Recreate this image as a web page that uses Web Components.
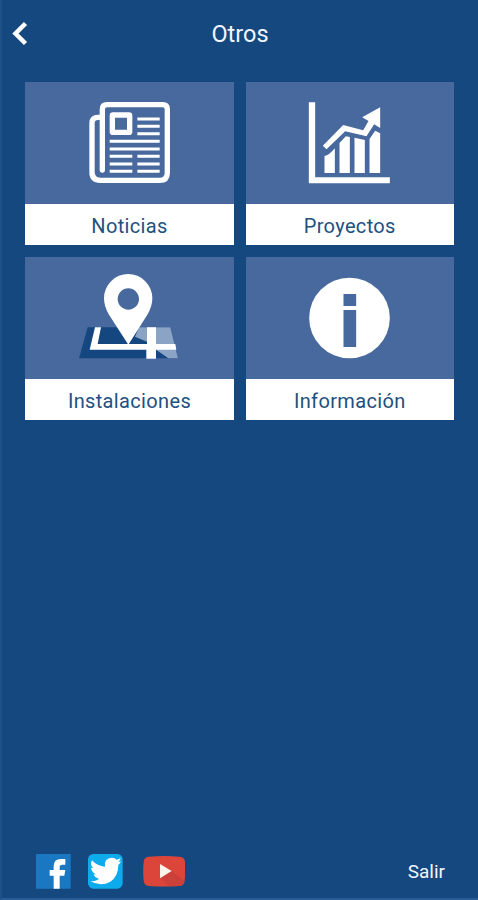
<!DOCTYPE html>
<html lang="es">
<head>
<meta charset="utf-8">
<title>Otros</title>
<style>
    body {
        margin: 0;
        background: #15487f;
    }
</style>
</head>
<body>
<others-screen>
    <app-bar slot="header">Otros</app-bar>
    <menu-tile label="Noticias">
        <svg viewBox="30 36 627 366" fill="none" stroke="#fff">
            <path stroke-width="16" stroke-linecap="round" stroke-linejoin="round" d="M262 300V118Q262 104 276 104H443Q457 104 457 118V308Q457 331 434 331H256Q231 331 231 306V160Q231 142 249 142H256"/>
            <rect x="292" y="135" width="52" height="52" rx="2" stroke-width="16"/>
            <path stroke-width="9" d="M367 147H434M367 169H434M367 191H434M284 214H434M284 237H434M284 259H352M367 259H434M284 282H352M367 282H434M284 304H352M367 304H434"/>
        </svg>
    </menu-tile>
    <menu-tile label="Proyectos">
        <svg viewBox="31.5 36 625.5 366" fill="#fff">
            <path d="M220 97H239V322H463V340H220Z"/>
            <path d="M262 227L323 165L383 181L399 153L380 142L434 112V174L416 163L393 199L329 184L273 238Z"/>
            <path d="M267 258Q281 256 298 235V309H267ZM312 219L331 199L343 201V309H312ZM357 203L388 210V309H357ZM402 207L419 182L434 190V309H402Z"/>
        </svg>
    </menu-tile>
    <menu-tile label="Instalaciones">
        <svg viewBox="30 21 627 366">
            <path fill="#144780" d="M218 232H466L489 325H192Z"/>
            <path fill="#8ba3c5" d="M372 232H466L489 325H460L423 299L396 275L360 260Z"/>
            <path fill="#fff" d="M240 232H258L248 282H396V232H423V282H481L484 299H423V326H394V299H224Z"/>
            <path fill="#fff" fill-rule="evenodd" d="M340 284L282 194Q267 170 267 145A72.500 73 0 0 1 412 145Q412 170 397 194ZM340 115A32 32 0 1 0 340 179A32 32 0 1 0 340 115Z"/>
        </svg>
    </menu-tile>
    <menu-tile label="Información">
        <svg viewBox="31.5 21 625.5 366">
            <circle cx="342" cy="204" r="121" fill="#fff"/>
            <path fill="#48699d" d="M324 132H362V168H324ZM324 180H362V291H324Z"/>
        </svg>
    </menu-tile>
    <social-bar slot="footer">Salir</social-bar>
</others-screen>

<script>
class OthersScreen extends HTMLElement {

    constructor() {
        super();
        this.attachShadow({mode: "open"}).innerHTML = `
            <style>
                :host {
                    display: flex;
                    flex-direction: column;
                    box-sizing: border-box;
                    height: 900px;
                    color: #f0f6ff;
                    font-family: Roboto, sans-serif;
                    border-left: 2px solid #1f5086;
                    border-bottom: 2px solid #295c95;
                }

                main {
                    flex: 1;
                    display: grid;
                    grid-template-columns: 209px 208.500px;
                    grid-auto-rows: 163px;
                    align-content: start;
                    gap: 12px 11.500px;
                    padding: 13.500px 0 0 23px;
                }
            </style>
            <slot name="header"></slot>
            <main><slot></slot></main>
            <slot name="footer"></slot>`;
    }
}

class AppBar extends HTMLElement {

    constructor() {
        super();
        this.attachShadow({mode: "open"}).innerHTML = `
            <style>
                :host {
                    display: grid;
                    grid-template-columns: 40px 1fr 40px;
                    align-items: center;
                    height: 68px;
                    font-size: 23.500px;
                    text-align: center;
                }

                svg {
                    width: 18px;
                    height: 26px;
                    margin-left: 9px;
                    display: block;
                }
            </style>
            <svg viewBox="0 0 18 26" fill="none" stroke="#fff" stroke-width="4.500">
                <path d="M14.500 2.500L4.500 12.500L14.500 22.500"/>
            </svg>
            <span><slot></slot></span>`;
    }
}

class MenuTile extends HTMLElement {

    constructor() {
        super();
        this.shadowDOM = this.attachShadow({mode: "open"});
    }

    connectedCallback() {
        this.shadowDOM.innerHTML = `
            <style>
                :host {
                    display: flex;
                    flex-direction: column;
                    background: #48699d;
                }

                ::slotted(svg) {
                    display: block;
                    width: 100%;
                    height: 122px;
                }

                .label {
                    flex: 1;
                    display: flex;
                    align-items: center;
                    justify-content: center;
                    padding-top: 3px;
                    background: #fff;
                    color: #23507f;
                    font-size: 20px;
                    letter-spacing: 0.35px;
                }
            </style>
            <slot></slot>
            <div class="label">${this.getAttribute("label")}</div>`;
    }
}

class SocialBar extends HTMLElement {

    constructor() {
        super();
        this.attachShadow({mode: "open"}).innerHTML = `
            <style>
                :host {
                    display: flex;
                    align-items: center;
                    height: 54px;
                    padding: 0 33px 0 34px;
                    font-size: 19px;
                }

                svg {
                    flex: none;
                    display: block;
                    height: 35px;
                }

                .facebook {
                    width: 35px;
                    margin-right: 17px;
                }

                .twitter {
                    width: 35px;
                    margin-right: 20px;
                }

                .youtube {
                    width: 42px;
                }

                span {
                    margin-left: auto;
                }
            </style>
            <svg class="facebook" viewBox="48 43 105 105">
                <path fill="#1a78c2" d="M48 43H152V147H48Z"/>
                <path fill="#fff" d="M101 147V108H89V91H101V80Q101 58 123 58H136V75H127Q119 75 119 83V91H136L133 108H119V147Z"/>
            </svg>
            <svg class="twitter" viewBox="205 43 105 105">
                <rect x="205" y="43" width="104" height="104" rx="16" fill="#0dabec"/>
                <path fill="#fff" d="M217 62Q233 80 256 81Q252 55 277 54Q286 54 291 60Q297 59 303 55Q302 62 296 67L304 65Q301 72 296 76Q296 110 272 126Q244 142 212 125Q229 125 238 117Q226 115 222 104H229Q216 98 214 84L221 86Q210 76 217 62Z"/>
            </svg>
            <svg class="youtube" viewBox="368 41 126 105">
                <path fill="#dc463a" d="M385 49Q431 45 478 49Q493 50 494 66Q496 92 493 119Q492 136 477 137Q431 140 385 137Q371 136 370 120Q367 92 370 66Q371 50 385 49Z"/>
                <path fill="#cb4038" d="M454 92L493 122Q491 136 477 137H444L419 113Z"/>
                <path fill="#fff4ec" d="M419 71L454 92L419 114Z"/>
            </svg>
            <span><slot></slot></span>`;
    }
}

customElements.define("others-screen", OthersScreen);
customElements.define("app-bar", AppBar);
customElements.define("menu-tile", MenuTile);
customElements.define("social-bar", SocialBar);
</script>
</body>
</html>
